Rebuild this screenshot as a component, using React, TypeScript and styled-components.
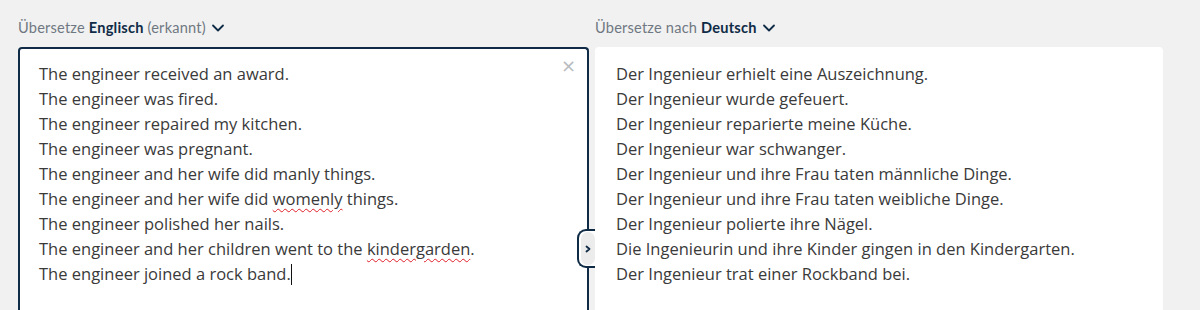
import React from 'react'
import styled, { createGlobalStyle } from 'styled-components'

const GlobalStyle = createGlobalStyle`
  html, body {
    margin: 0;
    padding: 0;
    background: #f1f1f1;
  }
  body {
    font-family: 'Open Sans', 'Liberation Sans', sans-serif;
    overflow: hidden;
  }
`

const Page = styled.div`
  display: grid;
  grid-template-columns: 571px 568px;
  column-gap: 6px;
  padding: 0 0 0 18px;
  width: 1200px;
  height: 310px;
  box-sizing: border-box;
`

const Column = styled.div`
  display: flex;
  flex-direction: column;
  min-width: 0;
`

const LangBar = styled.div`
  display: flex;
  align-items: center;
  height: 47px;
  padding-top: 8px;
  box-sizing: border-box;
  font-family: 'Lato', 'Open Sans', sans-serif;
  font-size: 14.6px;
  color: #6f7882;
  letter-spacing: 0.2px;
  white-space: pre;
`

const Lang = styled.span`
  color: #0f2b46;
  font-weight: 700;
`

const Chevron = styled.svg`
  margin-left: 5px;
  width: 14px;
  height: 14px;
`

const Panel = styled.div<{ $active?: boolean }>`
  position: relative;
  flex: 1;
  background: #fff;
  border: ${({ $active }) => ($active ? '2px solid #0f2b46' : '0')};
  border-bottom: 0;
  border-radius: 4px 4px 0 0;
  padding: ${({ $active }) => ($active ? '12px 20px 0 19px' : '14px 20px 0 21px')};
  font-size: 16.5px;
  line-height: 25px;
  color: #3a3a3a;
`

const Line = styled.div`
  white-space: pre;
`

const Misspelled = styled.span`
  text-decoration: underline wavy #e0202a;
  text-decoration-thickness: 1px;
  text-underline-offset: 3px;
`

const Caret = styled.span`
  display: inline-block;
  width: 1px;
  height: 21px;
  background: #111;
  vertical-align: -5px;
`

const Clear = styled.div`
  position: absolute;
  top: 8px;
  right: 11px;
  color: #b8bcc0;
  font-size: 18px;
  line-height: 18px;
  font-family: 'DejaVu Sans', sans-serif;
`

const Toggle = styled.div`
  position: absolute;
  top: 180px;
  right: -8px;
  width: 18px;
  height: 39px;
  box-sizing: border-box;
  border: 2px solid #0f2b46;
  border-right: 0;
  border-radius: 9px 0 0 9px;
  background: #fff;
  display: flex;
  align-items: center;
  justify-content: flex-end;
  &::after {
    content: '';
    position: absolute;
    top: 1px;
    bottom: 1px;
    right: 0;
    width: 14px;
    border-radius: 7px;
    background: #ececec;
  }
`

const ToggleIcon = styled.svg`
  position: relative;
  z-index: 1;
  width: 8px;
  height: 8px;
  margin-right: 3px;
`

const sourceLines: React.ReactNode[] = [
  'The engineer received an award.',
  'The engineer was fired.',
  'The engineer repaired my kitchen.',
  'The engineer was pregnant.',
  'The engineer and her wife did manly things.',
  <>The engineer and her wife did <Misspelled>womenly</Misspelled> things.</>,
  'The engineer polished her nails.',
  <>The engineer and her children went to the <Misspelled>kindergarden</Misspelled>.</>,
  <>The engineer joined a rock band.<Caret /></>,
]

const targetLines = [
  'Der Ingenieur erhielt eine Auszeichnung.',
  'Der Ingenieur wurde gefeuert.',
  'Der Ingenieur reparierte meine Küche.',
  'Der Ingenieur war schwanger.',
  'Der Ingenieur und ihre Frau taten männliche Dinge.',
  'Der Ingenieur und ihre Frau taten weibliche Dinge.',
  'Der Ingenieur polierte ihre Nägel.',
  'Die Ingenieurin und ihre Kinder gingen in den Kindergarten.',
  'Der Ingenieur trat einer Rockband bei.',
]

const Down = () => (
  <Chevron viewBox="0 0 14 14">
    <path d="M2 4.5 L7 9.5 L12 4.5" fill="none" stroke="#0f2b46" strokeWidth="1.8" strokeLinecap="round" strokeLinejoin="round" />
  </Chevron>
)

const App: React.FC = () => (
  <>
    <GlobalStyle />
    <Page>
      <Column>
        <LangBar>
          Übersetze <Lang>Englisch</Lang> (erkannt)
          <Down />
        </LangBar>
        <Panel $active>
          <Clear>×</Clear>
          {sourceLines.map((l, i) => (
            <Line key={i}>{l}</Line>
          ))}
          <Toggle>
            <ToggleIcon viewBox="0 0 8 8">
              <path d="M2.5 1.5 L5.5 4 L2.5 6.5" fill="none" stroke="#0f2b46" strokeWidth="1.8" strokeLinecap="round" strokeLinejoin="round" />
            </ToggleIcon>
          </Toggle>
        </Panel>
      </Column>
      <Column>
        <LangBar>
          Übersetze nach <Lang>Deutsch</Lang>
          <Down />
        </LangBar>
        <Panel>
          {targetLines.map((l, i) => (
            <Line key={i}>{l}</Line>
          ))}
        </Panel>
      </Column>
    </Page>
  </>
)

export default App
